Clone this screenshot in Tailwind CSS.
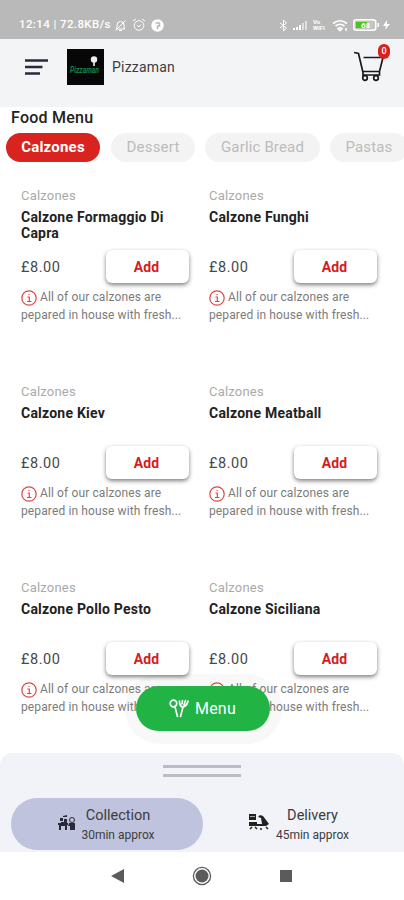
<!DOCTYPE html>
<html lang="en">
<head>
<meta charset="utf-8">
<title>Pizzaman</title>
<script src="https://cdn.jsdelivr.net/npm/@tailwindcss/browser@4"></script>
</head>
<body class="relative isolate flex h-[900px] w-[404px] flex-col overflow-hidden bg-white font-['Roboto',sans-serif] text-[#3c3c40]">
  <div class="flex h-[39px] shrink-0 items-end justify-between bg-[#b9b9b9] pr-[14px] pb-[6px] pl-[19px] text-white">
    <div class="flex h-4 items-center">
      <span class="w-[93px] text-[11.5px] font-medium tracking-[0.4px] whitespace-nowrap">12:14 | 72.8KB/s</span>
      <svg class="ml-[2px] h-[13px] w-[13px]" viewBox="0 0 13 13" fill="none" stroke="currentColor"><path d="M3 9V6Q3 2.500 6.500 2.500T10 6V9L11 10H2ZM5 11.500H8M1.500 11.500 11.500 1.500"/></svg>
      <svg class="ml-[5px] h-[14px] w-[14px]" viewBox="0 0 14 14" fill="none" stroke="currentColor"><circle cx="7" cy="7.500" r="4.800"/><path d="M1 3 4 1M13 3 10 1M5 7 7 9 9 6.500"/></svg>
      <svg class="ml-[5px] h-[13px] w-[13px]" viewBox="0 0 13 13"><circle cx="6.500" cy="6.500" r="6.200" fill="#fff"/><path d="M4.500 4H8.500V7H6.500V10" fill="none" stroke="#b9b9b9" stroke-width="1.500"/></svg>
    </div>
    <div class="flex h-4 items-center">
      <svg class="h-[13px] w-[9px]" viewBox="0 0 9 13" fill="none" stroke="currentColor"><path d="M1 4 7.500 9 4.500 12V1L7.500 4 1 9"/></svg>
      <svg class="ml-[5px] h-[12px] w-[15px]" viewBox="0 0 15 12" fill="currentColor"><path d="M0 9h2v2H0zM3 8h2v3H3zM6 6h2v5H6z"/><path d="M9 4h2v7H9zM12 2h2v9h-2z" opacity=".55"/></svg>
      <div class="ml-[5px] w-[15px] text-[6px] leading-[6px] font-bold">Vo<br>WiFi</div>
      <svg class="ml-[4px] h-[13px] w-[17px]" viewBox="0 0 17 13" fill="none" stroke="currentColor" stroke-width="1.600"><path d="M1 4.500Q8 -1 15 4.500M3.500 7Q8 3.500 12.500 7M6 9.500Q8 8 10 9.500L8 11.500Z"/><path d="M14 9V12" stroke-width="1.500"/></svg>
      <svg class="ml-[4px] h-[12px] w-[27px]" viewBox="0 0 27 12"><rect x=".8" y=".8" width="22" height="10.400" rx="2.500" fill="#c4c4c4" stroke="#fff" stroke-width="1.500"/><path d="M3 3h11v6H3z" fill="#46c51d"/><path d="M24.500 4h1.500v4h-1.500z" fill="#fff"/><text x="8" y="9" font-size="8" font-weight="700" fill="#fff">68</text></svg>
      <svg class="ml-[3px] h-[12px] w-[7px]" viewBox="0 0 7 12" fill="currentColor"><path d="M4 1 0 7H3L2 11 7 5H4Z"/></svg>
    </div>
  </div>

  <header class="flex h-[68px] shrink-0 items-start bg-[#f3f4f6] pt-[10px] pr-[16px] pl-[25px]">
    <svg class="mt-[9px] h-[18px] w-[23px]" viewBox="0 0 23 18" stroke="#282a3c" stroke-width="2.400"><path d="M0 2.500H23M0 9H17.500M0 15.500H15"/></svg>
    <svg class="ml-[19px] h-[36px] w-[37px]" viewBox="0 0 37 36"><path fill="#070707" d="M0 0h37v36H0z"/><text x="3" y="24" font-size="9" font-style="italic" font-weight="700" textLength="29" lengthAdjust="spacingAndGlyphs" fill="#14854a">Pizzaman</text><path d="M27 11V17" stroke="#b8c8be" stroke-width="2"/><circle cx="27" cy="10.500" r="3.200" fill="#eee"/></svg>
    <span class="mt-[8px] ml-[8px] text-[14px] leading-5 tracking-[0.2px]">Pizzaman</span>
    <div class="relative mt-[2px] ml-auto h-[34px] w-[34px]">
      <svg class="h-[34px] w-[32px]" viewBox="0 0 32 34" fill="none" stroke="#191919" stroke-width="1.700"><path d="M0 1.500 4.500 2.500 9 21.500V25M8 20.500H25.500L29 6.500H9.500M9 24H25.500V21"/><circle cx="11" cy="27" r="2.300"/><circle cx="22" cy="27" r="2.300"/></svg>
      <span class="absolute -top-[7px] left-[24px] flex h-[15px] w-[12px] items-center justify-center rounded-full bg-[#d9211c] text-[9px] font-medium text-white">0</span>
    </div>
  </header>

  <main class="h-[646px] shrink-0 overflow-hidden">
    <h1 class="pl-[11px] text-[16px] leading-[21px] font-medium tracking-[0.25px] text-[#222]">Food Menu</h1>
    <nav class="mt-[5px] flex h-[29px] pl-[6px] text-[15px] leading-[28px] whitespace-nowrap text-[#bcbcbc]">
      <span class="w-[94px] shrink-0 rounded-full bg-[#d9231f] text-center font-bold tracking-[0.2px] text-white">Calzones</span>
      <span class="ml-[11px] w-[84px] shrink-0 rounded-full bg-[#f3f3f3] text-center tracking-[0.2px]">Dessert</span>
      <span class="ml-[10px] w-[115px] shrink-0 rounded-full bg-[#f3f3f3] text-center tracking-[0.15px]">Garlic Bread</span>
      <span class="ml-[10px] w-[78px] shrink-0 rounded-full bg-[#f3f3f3] text-center tracking-[0.15px]">Pastas</span>
    </nav>
    <div id="items" class="mt-[25px] grid auto-rows-[196px] grid-cols-[168px_168px] gap-x-[20px] pl-[21px]"></div>
  </main>

  <section class="flex h-[99px] shrink-0 flex-col rounded-t-xl bg-[#f2f3f8]">
    <div class="mx-auto mt-[12px] flex h-[12px] w-[78px] flex-col justify-between"><i class="h-[3px] bg-[#bbbcc4]"></i><i class="h-[3px] bg-[#bbbcc4]"></i></div>
    <div class="mt-[21px] flex h-[52px] px-[11px]">
      <div class="flex w-[192px] items-center rounded-full bg-[#bfc3de] pl-[47px]">
        <svg class="mb-[4px] h-[17px] w-[18px]" viewBox="0 0 18 17" fill="#282a3c"><path d="M0 9h10v2H9v5H7v-4H3v4H1v-5H0zM2 4h3v3H2zM5 2l4-1v2H5zM6 5h3v3H6zM11 9h5v7h-4v-4h-2z"/><circle cx="14" cy="6" r="2.500" fill="none" stroke="#282a3c"/><path d="M16 9h1v7h-1zM3 8h6v1H3z"/></svg>
        <div class="ml-[4px] w-[76px] pt-[3px] text-center"><div class="text-[14.5px] leading-[18px]">Collection</div><div class="mt-px text-[12px] leading-[18px] whitespace-nowrap">30min approx</div></div>
      </div>
      <div class="flex w-[190px] items-center pl-[45px]">
        <svg class="mb-[5px] h-[18px] w-[22px]" viewBox="0 0 22 18" fill="#222"><path d="M1 1h7v6H1zM1 9h8v4H1zM9 11h5l-1-6-3-1 2-2 3 1 6 8-3 2h-9z"/><path d="M2 3h5v1H2z" fill="#aaa"/><path d="M2 16 4 14M7 14 9 16M12 16h2M18 14l2 2" stroke="#222" stroke-width="1.500"/></svg>
        <div class="ml-[5px] w-[75px] pt-[3px] text-center"><div class="text-[14.5px] leading-[18px]">Delivery</div><div class="mt-px text-[12px] leading-[18px] whitespace-nowrap">45min approx</div></div>
      </div>
    </div>
  </section>

  <footer class="flex h-[48px] items-center pl-[111px]">
    <svg class="h-[14px] w-[13px]" viewBox="0 0 13 14"><path d="M0 7 13 0V14Z" fill="#5b5b5b"/></svg>
    <svg class="ml-[68px] h-[20px] w-[20px]" viewBox="0 0 20 20"><circle cx="10" cy="10" r="8.600" fill="none" stroke="#5b5b5b" stroke-width="1.300"/><circle cx="10" cy="10" r="6.500" fill="#5b5b5b"/></svg>
    <i class="ml-[68px] h-[12px] w-[12px] bg-[#5b5b5b]"></i>
  </footer>

  <div class="absolute top-[674px] left-[125px] -z-10 h-[70px] w-[157px] rounded-full bg-[#f8f8f8]"></div>
  <button class="absolute top-[686px] left-[136px] flex h-[45px] w-[134px] items-center rounded-full bg-[#22b345] pl-[33px] text-[16px] text-white">
    <svg class="h-[19px] w-[20px]" viewBox="0 0 20 19" fill="none" stroke="currentColor" stroke-width="1.700" stroke-linecap="round"><circle cx="4.500" cy="4.500" r="3.300"/><path d="M6 8 8.500 17.500M11.500 17.500 14 8M10.500 2Q10.500 8 14 8 18 7 19 2M13.500 1.500 13 5M16.500 1.500 15 6"/></svg>
    <span class="ml-[6px] tracking-[0.2px]">Menu</span>
  </button>

  <script>
    const names = ['Calzone Formaggio Di Capra', 'Calzone Funghi', 'Calzone Kiev', 'Calzone Meatball', 'Calzone Pollo Pesto', 'Calzone Siciliana'];
    document.getElementById('items').innerHTML = names.map(name => `
      <article class="flex flex-col">
        <p class="text-[13px] leading-[17px] tracking-[0.2px] text-[#aaa]">Calzones</p>
        <h2 class="mt-[5px] h-[32px] w-[155px] text-[14px] leading-[16px] font-bold tracking-[0.22px] text-[#222]">${name}</h2>
        <div class="mt-[9px] flex h-[33px] items-center justify-between">
          <span class="pt-[2px] text-[14.5px] tracking-[0.55px] text-[#484848]">£8.00</span>
          <button class="h-[33px] w-[83px] rounded-[6px] bg-white pt-[2px] pr-[2px] text-[14px] font-bold tracking-[0.1px] text-[#d51d1d] shadow-[0_2px_4px_rgba(0,0,0,0.5)]">Add</button>
        </div>
        <div class="mt-[6px] text-[12px] leading-[17.5px] tracking-[0.12px] whitespace-nowrap text-[#7c7c7c]">
          <div class="flex"><svg class="mt-[1px] mr-[3px] h-[16px] w-[16px]" viewBox="0 0 16 16" fill="none" stroke="#df4545" stroke-width="1.200"><circle cx="8" cy="8" r="7.200"/><path d="M6.500 7H8.300V11.500M6 11.500H10.500M7.500 4.500H8.600"/></svg>All of our calzones are</div>
          <div>pepared in house with fresh...</div>
        </div>
      </article>`).join('');
  </script>
</body>
</html>
